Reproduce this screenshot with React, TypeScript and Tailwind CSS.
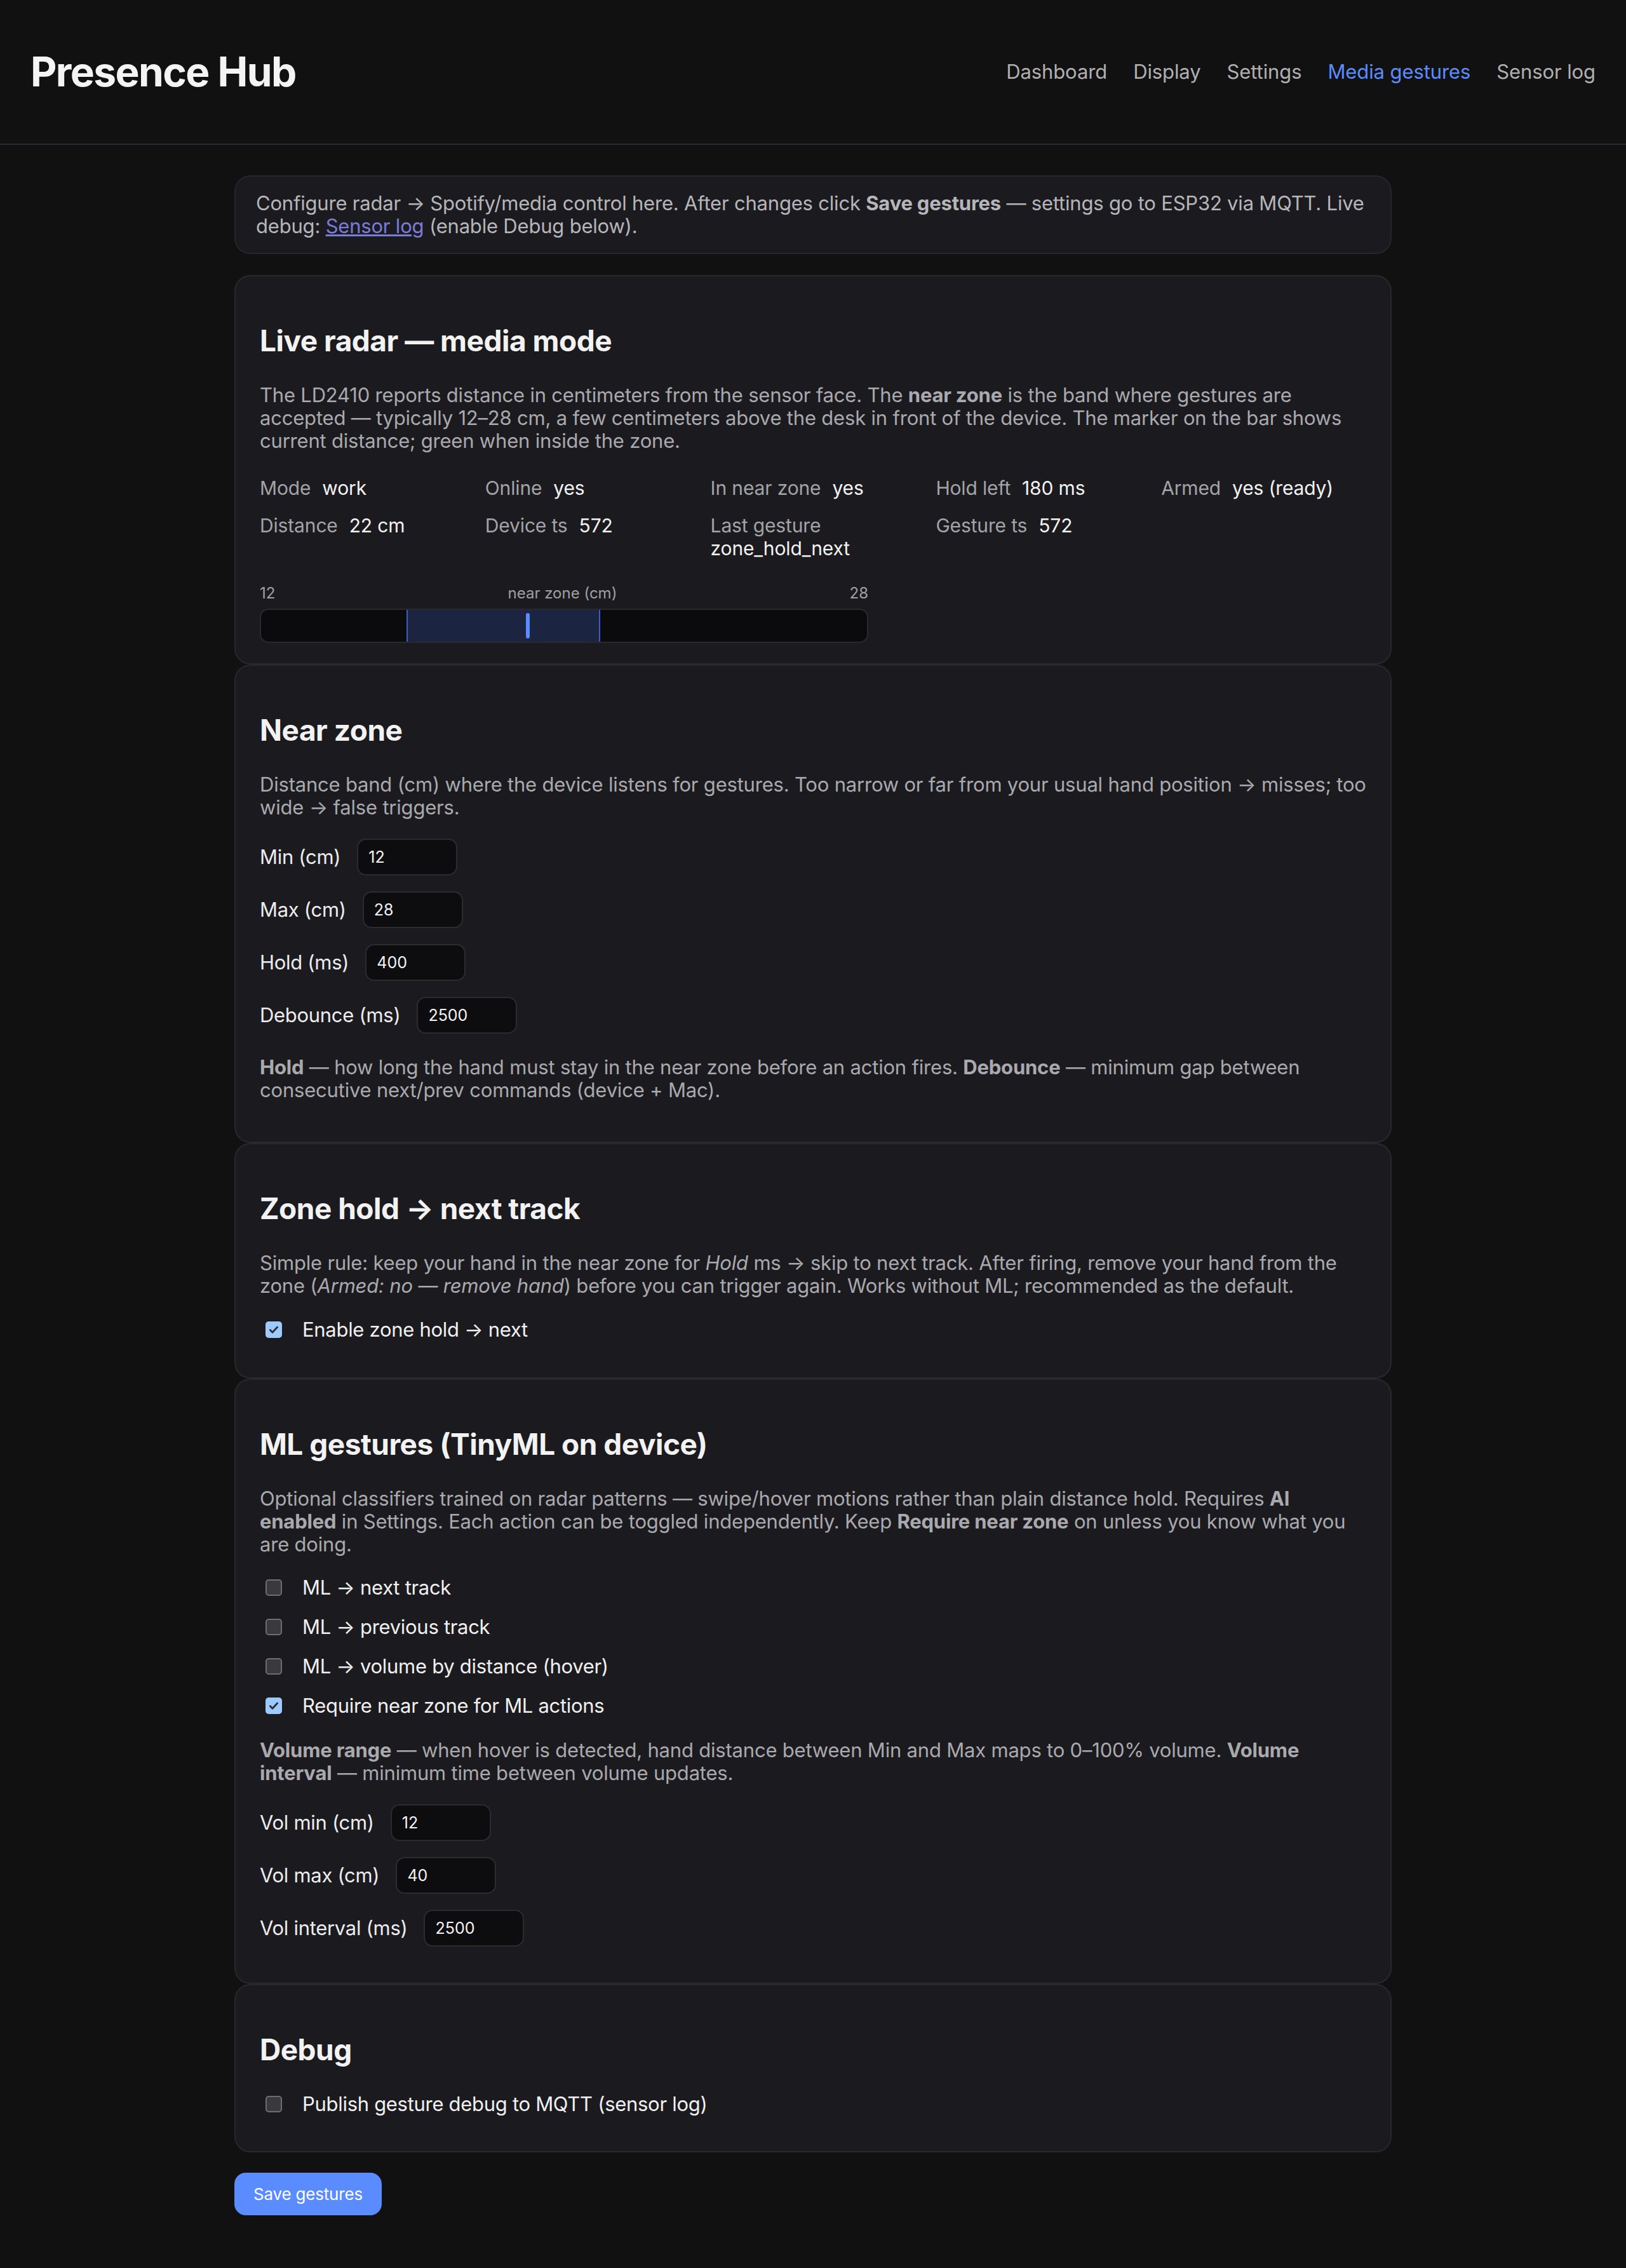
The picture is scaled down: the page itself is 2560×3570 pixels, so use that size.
import type { ReactNode } from 'react';

const navItems = ['Dashboard', 'Display', 'Settings', 'Media gestures', 'Sensor log'];

const stats: [string, string][] = [
  ['Mode', 'work'],
  ['Online', 'yes'],
  ['In near zone', 'yes'],
  ['Hold left', '180 ms'],
  ['Armed', 'yes (ready)'],
  ['Distance', '22 cm'],
  ['Device ts', '572'],
  ['Last gesture', 'zone_hold_next'],
  ['Gesture ts', '572'],
];

// bar scale runs 0..50 cm
const SCALE = 50;
const zone = { min: 12, max: 28, distance: 22 };

export default function App() {
  return (
    <div className="min-h-screen bg-[#111111] text-[#ececee] font-['Inter','Noto_Sans',sans-serif]">
      <header className="h-[228px] flex items-center justify-between px-[48px] border-b-2 border-[#2a2a30]">
        <h1 className="text-[64px] font-bold tracking-[-1.6px] text-[#f4f4f4]">Presence Hub</h1>
        <nav className="flex gap-[41px] text-[31px] tracking-[-0.1px]">
          {navItems.map((item) => (
            <a
              key={item}
              href="#"
              className={item === 'Media gestures' ? 'text-[#5b8cff]' : 'text-[#b0b0b2]'}
            >
              {item}
            </a>
          ))}
        </nav>
      </header>

      <main className="w-[1822px] mx-auto pt-[48px] pb-[81px]">
        <div className="mb-[33px] rounded-[25px] border-2 border-[#26262b] bg-[#1b1b1f] px-[32px] py-[24px] text-[31px] leading-[36px] tracking-[-0.2px] text-[#b6b6ba]">
          Configure radar → Spotify/media control here. After changes click{' '}
          <b className="font-bold">Save gestures</b> — settings go to ESP32 via MQTT. Live debug:{' '}
          <a href="#" className="text-[#7b7bd8] underline">
            Sensor log
          </a>{' '}
          (enable Debug below).
        </div>

        <Card title="Live radar — media mode">
          <Para>
            The LD2410 reports distance in centimeters from the sensor face. The{' '}
            <b className="font-bold">near zone</b> is the band where gestures are accepted — typically
            12–28 cm, a few centimeters above the desk in front of the device. The marker on the bar shows
            current distance; green when inside the zone.
          </Para>

          <div className="mt-[38px] grid grid-cols-5 gap-x-[32px] gap-y-[23px] text-[30px] leading-[36px] tracking-[-0.15px]">
            {stats.map(([label, value]) => (
              <div key={label} className="flex flex-wrap gap-x-[18px]">
                <span className="text-[#a3a3a8]">{label}</span>
                <span className="text-[#f2f2f2]">{value}</span>
              </div>
            ))}
          </div>

          <div className="mt-[39px] w-[958px]">
            <div className="flex justify-between text-[24px] leading-[28px] text-[#a0a0a4]">
              <span>{zone.min}</span>
              <span>near zone (cm)</span>
              <span>{zone.max}</span>
            </div>
            <div className="relative mt-[10px] h-[54px] overflow-hidden rounded-[14px] border-2 border-[#2a2a2e] bg-[#0b0b0d]">
              <div
                className="absolute inset-y-0 border-x-2 border-[#3a5bc9] bg-[#1b2440]"
                style={{
                  left: `${(zone.min / SCALE) * 100}%`,
                  width: `${((zone.max - zone.min) / SCALE) * 100}%`,
                }}
              />
              <div
                className="absolute top-[5px] bottom-[5px] w-[6px] rounded-full bg-[#5b8cff]"
                style={{ left: `calc(${(zone.distance / SCALE) * 100}% - 3px)` }}
              />
            </div>
          </div>
        </Card>

        <Card title="Near zone">
          <Para>
            Distance band (cm) where the device listens for gestures. Too narrow or far from your usual hand
            position → misses; too wide → false triggers.
          </Para>
          <div className="mt-[31px] flex flex-col gap-[25px]">
            <Field label="Min (cm)" value="12" />
            <Field label="Max (cm)" value="28" />
            <Field label="Hold (ms)" value="400" />
            <Field label="Debounce (ms)" value="2500" />
          </div>
          <Para className="mt-[35px] mb-[31px]">
            <b className="font-bold">Hold</b> — how long the hand must stay in the near zone before an
            action fires. <b className="font-bold">Debounce</b> — minimum gap between consecutive
            next/prev commands (device + Mac).
          </Para>
        </Card>

        <Card title="Zone hold → next track">
          <Para>
            Simple rule: keep your hand in the near zone for <i>Hold</i> ms → skip to next track. After firing,
            remove your hand from the zone (<i>Armed: no — remove hand</i>) before you can trigger again. Works
            without ML; recommended as the default.
          </Para>
          <div className="mt-[33px] mb-[25px]">
            <Check checked label="Enable zone hold → next" />
          </div>
        </Card>

        <Card title="ML gestures (TinyML on device)">
          <Para>
            Optional classifiers trained on radar patterns — swipe/hover motions rather than plain distance
            hold. Requires <b className="font-bold">AI enabled</b> in Settings. Each action can be toggled
            independently. Keep <b className="font-bold">Require near zone</b> on unless you know what you
            are doing.
          </Para>
          <div className="mt-[32px] flex flex-col gap-[26px]">
            <Check label="ML → next track" />
            <Check label="ML → previous track" />
            <Check label="ML → volume by distance (hover)" />
            <Check checked label="Require near zone for ML actions" />
          </div>
          <Para className="mt-[34px]">
            <b className="font-bold">Volume range</b> — when hover is detected, hand distance between Min
            and Max maps to 0–100% volume. <b className="font-bold">Volume interval</b> — minimum time
            between volume updates.
          </Para>
          <div className="mt-[31px] mb-[25px] flex flex-col gap-[25px]">
            <Field label="Vol min (cm)" value="12" />
            <Field label="Vol max (cm)" value="40" />
            <Field label="Vol interval (ms)" value="2500" />
          </div>
        </Card>

        <Card title="Debug">
          <div className="mt-[40px] mb-[24px]">
            <Check label="Publish gesture debug to MQTT (sensor log)" />
          </div>
        </Card>

        <button className="mt-[32px] h-[67px] w-[232px] rounded-[18px] bg-[#5b8cff] text-[26px] tracking-[-0.2px] text-white">
          Save gestures
        </button>
      </main>
    </div>
  );
}

function Card({ title, children }: { title: string; children: ReactNode }) {
  return (
    <section className="rounded-[25px] border-2 border-[#28282d] bg-[#1b1b1f] px-[38px] pt-[38px] pb-[32px]">
      <h2 className="mt-[35px] text-[46px] leading-[56px] font-bold tracking-[-0.5px] text-[#f2f2f2]">{title}</h2>
      {children}
    </section>
  );
}

function Para({ children, className = 'mt-[40px]' }: { children: ReactNode; className?: string }) {
  return <p className={`${className} text-[31px] leading-[36px] tracking-[-0.2px] text-[#a9a9ae]`}>{children}</p>;
}

function Field({ label, value }: { label: string; value: string }) {
  return (
    <label className="flex items-center gap-[26px] text-[31px] leading-[36px] tracking-[-0.3px] text-[#ececee]">
      <span>{label}</span>
      <input
        defaultValue={value}
        className="h-[58px] w-[158px] rounded-[14px] border-2 border-[#2c2c30] bg-[#0d0d0f] pl-[16px] text-[25px] tracking-normal text-[#f4f4f4] outline-none"
      />
    </label>
  );
}

function Check({ label, checked = false }: { label: string; checked?: boolean }) {
  return (
    <label className="flex items-center text-[31px] leading-[36px] tracking-[-0.3px] text-[#f0f0f0]">
      <span
        className={
          checked
            ? 'ml-[9px] mr-[32px] flex h-[26px] w-[26px] items-center justify-center rounded-[5px] bg-[#9ecbff]'
            : 'ml-[9px] mr-[32px] h-[26px] w-[26px] rounded-[5px] border-2 border-[#6e6e70] bg-[#3a3a3c]'
        }
      >
        {checked && (
          <svg viewBox="0 0 16 16" className="h-[18px] w-[18px]">
            <path d="M3 8.5l3.2 3.2L13 4.5" fill="none" stroke="#2e2e30" strokeWidth="2.6" strokeLinecap="round" strokeLinejoin="round" />
          </svg>
        )}
      </span>
      {label}
    </label>
  );
}
